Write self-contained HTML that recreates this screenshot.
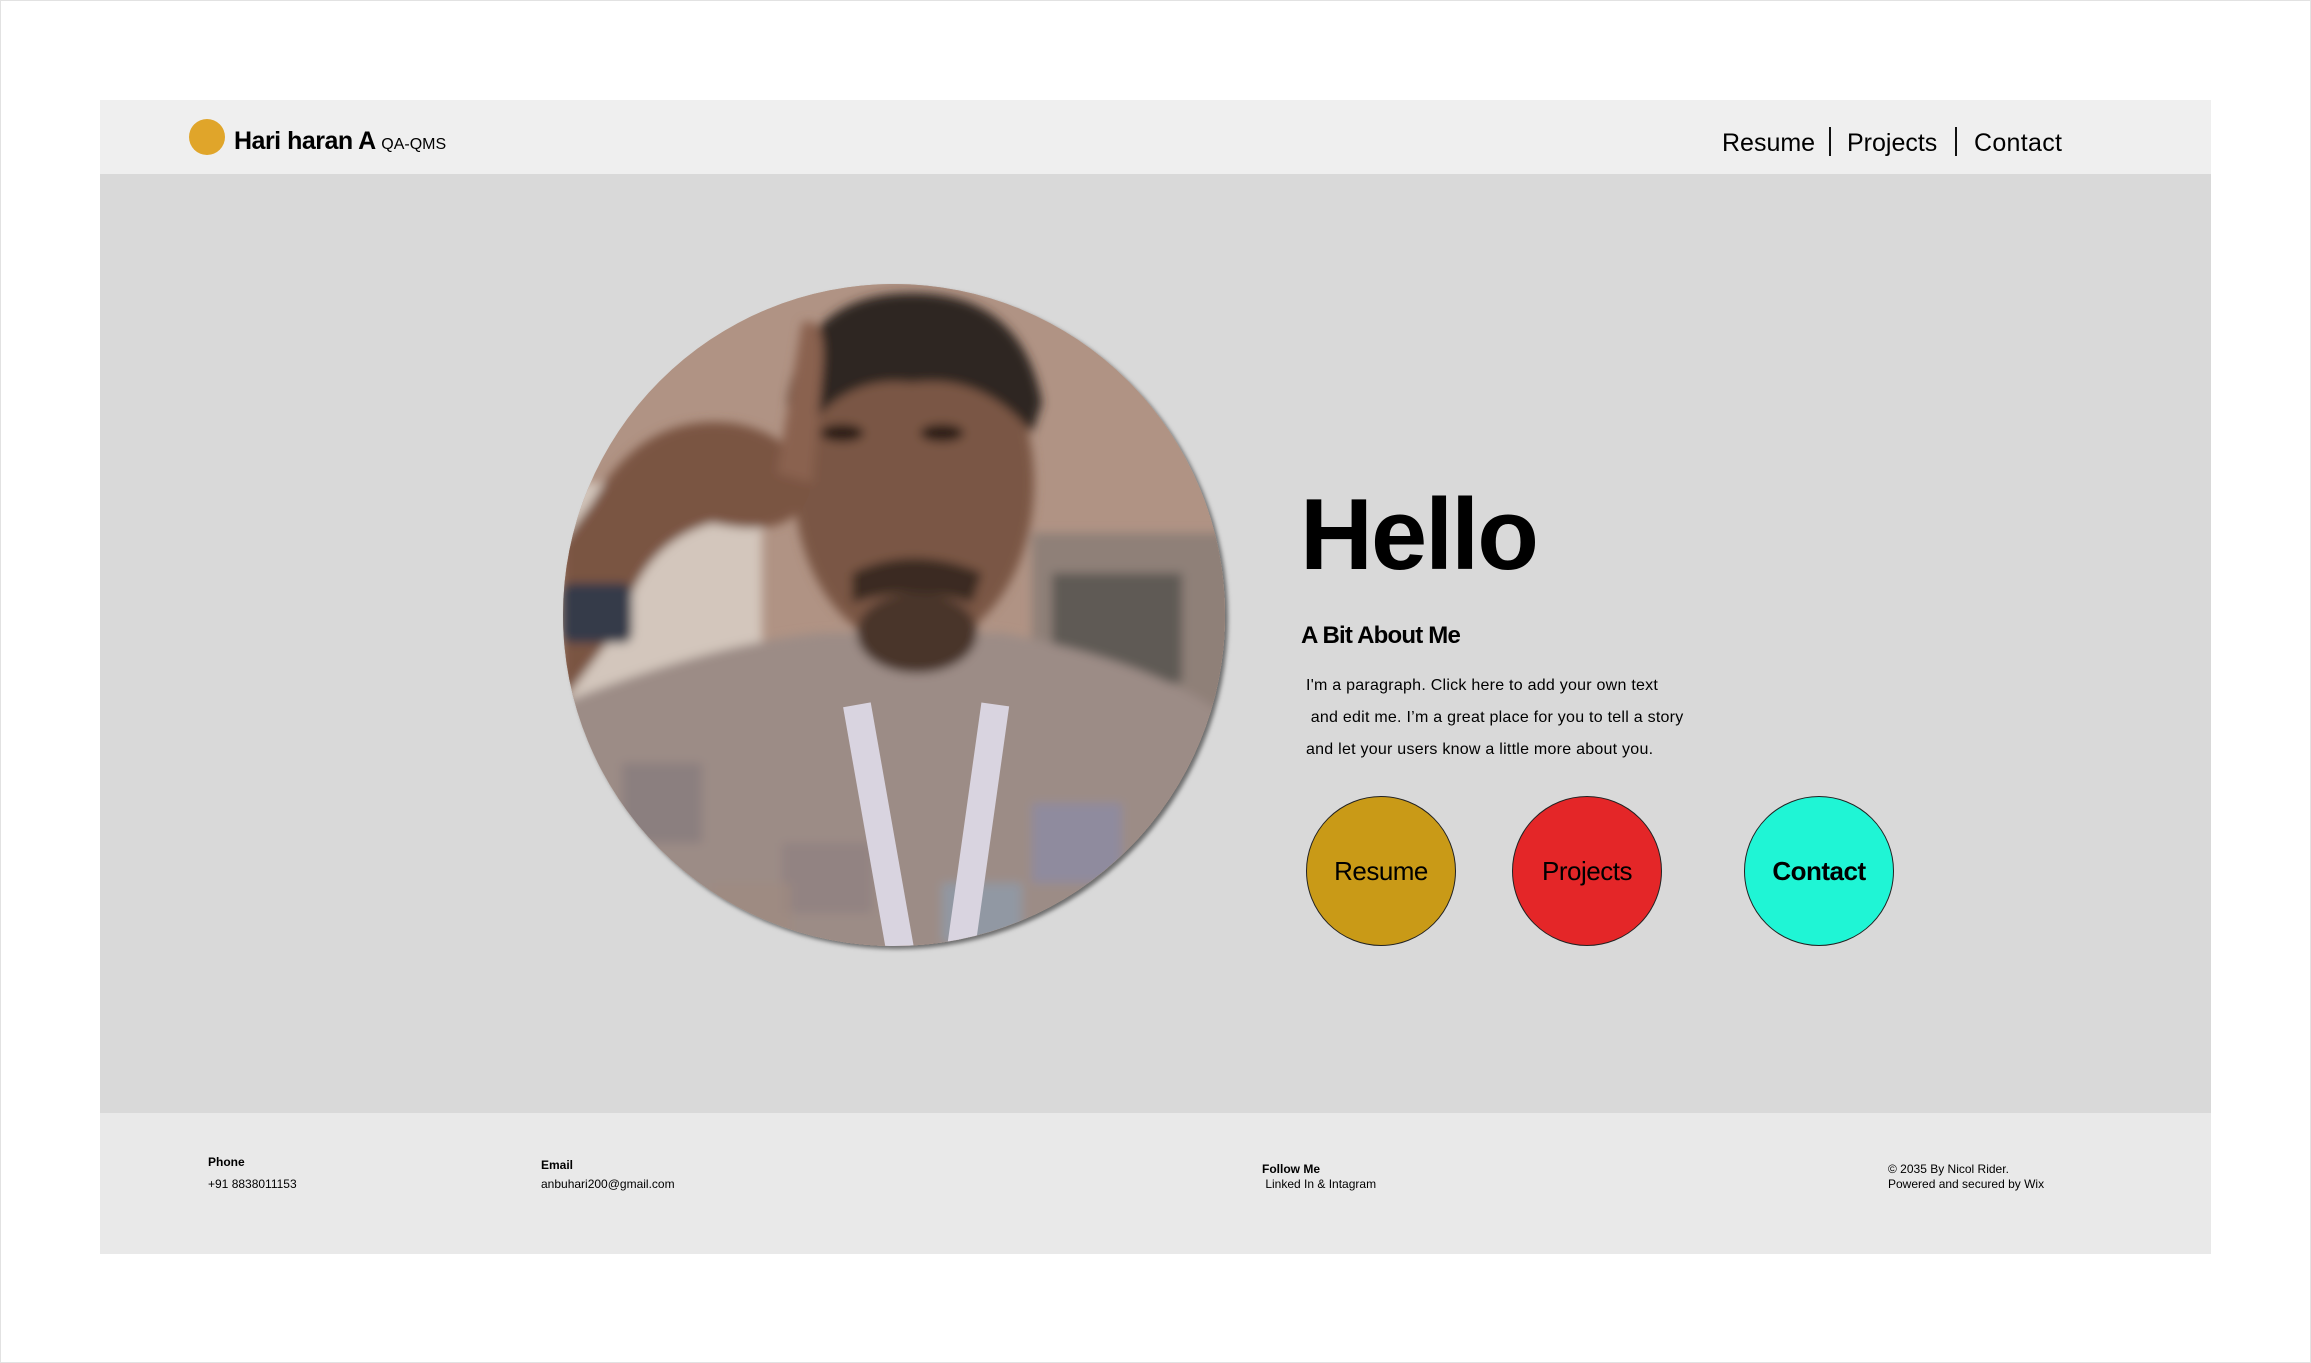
<!DOCTYPE html>
<html><head><meta charset="utf-8"><style>
html,body{margin:0;padding:0;}
body{width:2311px;height:1363px;background:#fff;position:relative;overflow:hidden;font-family:"Liberation Sans",sans-serif;color:#000;}
.frame{position:absolute;left:0;top:0;width:2309px;height:1361px;border:1px solid #e2e2e2;}
.hdr{position:absolute;left:100px;top:100px;width:2111px;height:74px;background:#efefef;}
.main{position:absolute;left:100px;top:174px;width:2111px;height:939px;background:#d9d9d9;}
.ftr{position:absolute;left:100px;top:1113px;width:2111px;height:141px;background:#e9e9e9;}
.abs{position:absolute;white-space:nowrap;}
.btn{position:absolute;width:150px;height:150px;border-radius:50%;border:1px solid #222;box-sizing:border-box;display:flex;align-items:center;justify-content:center;font-size:26px;letter-spacing:-0.5px;}
.f{font-size:12px;}
</style></head><body>
<div class="frame"></div>
<div class="hdr"></div>
<div class="main"></div>
<div class="ftr"></div>

<div class="abs" style="left:189px;top:119px;width:36px;height:36px;border-radius:50%;background:#e0a52a;"></div>
<div class="abs" style="left:234px;top:127px;font-size:25px;font-weight:bold;letter-spacing:-0.5px;">Hari haran A <span style="font-size:16px;font-weight:normal;letter-spacing:0">QA-QMS</span></div>

<div class="abs" style="left:1722px;top:129px;font-size:25px;">Resume</div>
<div class="abs" style="left:1829px;top:127px;width:2px;height:29px;background:#111;"></div>
<div class="abs" style="left:1847px;top:129px;font-size:25px;">Projects</div>
<div class="abs" style="left:1955px;top:127px;width:2px;height:29px;background:#111;"></div>
<div class="abs" style="left:1974px;top:129px;font-size:25px;letter-spacing:0.3px;">Contact</div>

<svg class="abs" style="left:562px;top:283px;" width="672" height="672" viewBox="0 0 672 672">
<defs>
<clipPath id="c"><circle cx="332" cy="332" r="331"/></clipPath>
<filter id="b"><feGaussianBlur stdDeviation="10"/></filter>
<filter id="s"><feGaussianBlur stdDeviation="5"/></filter>
<filter id="sh"><feDropShadow dx="3" dy="3" stdDeviation="2" flood-opacity="0.5"/></filter>
</defs>
<circle cx="332" cy="332" r="331" fill="#b89a88" filter="url(#sh)"/>
<g clip-path="url(#c)">
<rect width="672" height="672" fill="#b09384"/>
<g filter="url(#s)">
<rect x="0" y="200" width="200" height="220" fill="#d3c6bc"/>
<rect x="470" y="250" width="200" height="180" fill="#8f8078"/>
<rect x="490" y="290" width="130" height="110" fill="#5f5a55"/>
<path d="M0 420 Q150 360 260 350 L440 350 Q600 380 672 440 L672 672 L0 672 Z" fill="#9c8c86"/>
<rect x="60" y="480" width="80" height="80" fill="#85797c" opacity=".7"/>
<rect x="220" y="560" width="90" height="70" fill="#8e7f80" opacity=".7"/>
<rect x="470" y="520" width="90" height="80" fill="#8a8aa8" opacity=".7"/>
<rect x="380" y="600" width="80" height="60" fill="#8aa0b8" opacity=".6"/>
<rect x="150" y="600" width="80" height="72" fill="#a08a80" opacity=".7"/>
<ellipse cx="352" cy="200" rx="120" ry="165" fill="#7a5745"/>
<path d="M225 120 Q240 10 350 10 Q460 10 480 120 L470 150 Q420 90 350 100 Q280 90 235 160Z" fill="#2e2621"/>
<path d="M290 290 Q350 260 420 290 L410 320 Q350 300 290 320Z" fill="#3a2a22"/>
<ellipse cx="355" cy="350" rx="60" ry="40" fill="#4a362c"/>
<ellipse cx="280" cy="150" rx="22" ry="9" fill="#2a1d18"/>
<ellipse cx="380" cy="150" rx="22" ry="9" fill="#2a1d18"/>
<path d="M30 220 Q80 130 170 140 Q230 150 250 200 Q240 260 150 240 Q80 260 60 340 L0 420 L0 260Z" fill="#7a5543"/>
<path d="M240 40 Q265 30 260 90 L250 200 L215 190Z" fill="#8a6250"/>
<rect x="0" y="300" width="70" height="60" rx="10" fill="#343a48"/>
</g>
<rect x="300" y="420" width="28" height="260" fill="#d9d4e0" transform="rotate(-10 315 530)"/>
<rect x="404" y="420" width="28" height="260" fill="#d9d4e0" transform="rotate(8 415 530)"/>
</g>
</svg>

<div class="abs" style="left:1300px;top:478px;font-size:101px;font-weight:bold;letter-spacing:-2px;">Hello</div>
<div class="abs" style="left:1301px;top:622px;font-size:24px;font-weight:bold;letter-spacing:-0.8px;">A Bit About Me</div>
<div class="abs" style="left:1306px;top:670px;font-size:16px;line-height:32px;letter-spacing:0.25px;">I'm a paragraph. Click here to add your own text<br>&nbsp;and edit me. I’m a great place for you to tell a story<br>and let your users know a little more about you.</div>

<div class="btn" style="left:1306px;top:796px;background:#c99a17;">Resume</div>
<div class="btn" style="left:1512px;top:796px;background:#e42628;">Projects</div>
<div class="btn" style="left:1744px;top:796px;background:#1ff5d5;font-weight:bold;">Contact</div>

<div class="abs f" style="left:208px;top:1155px;font-weight:bold;">Phone</div>
<div class="abs f" style="left:208px;top:1177px;">+91 8838011153</div>
<div class="abs f" style="left:541px;top:1158px;font-weight:bold;">Email</div>
<div class="abs f" style="left:541px;top:1177px;">anbuhari200@gmail.com</div>
<div class="abs f" style="left:1262px;top:1162px;font-weight:bold;">Follow Me</div>
<div class="abs f" style="left:1262px;top:1177px;">&nbsp;Linked In &amp; Intagram</div>
<div class="abs f" style="left:1888px;top:1162px;">© 2035 By Nicol Rider.</div>
<div class="abs f" style="left:1888px;top:1177px;">Powered and secured by Wix</div>
</body></html>
